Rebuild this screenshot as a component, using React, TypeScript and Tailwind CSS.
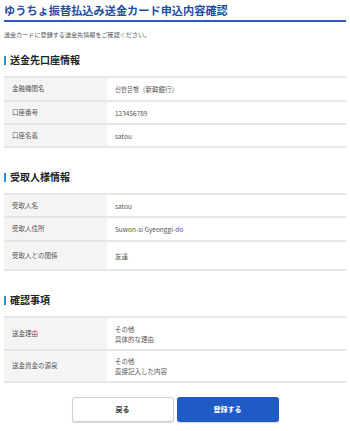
const font = { fontFamily: '"Noto Sans CJK JP", "Noto Sans CJK KR", sans-serif' };

interface Row {
  label: string;
  value: string[];
  h: string;
}

const sections: { title: string; rows: Row[] }[] = [
  {
    title: "送金先口座情報",
    rows: [
      { label: "金融機関名", value: ["신한은행（新韓銀行）"], h: "h-[24px]" },
      { label: "口座番号", value: ["123456789"], h: "h-[23px]" },
      { label: "口座名義", value: ["satou"], h: "h-[23px]" },
    ],
  },
  {
    title: "受取人様情報",
    rows: [
      { label: "受取人名", value: ["satou"], h: "h-[23px]" },
      { label: "受取人住所", value: ["Suwon-si Gyeonggi-do"], h: "h-[24px]" },
      { label: "受取人との関係", value: ["友達"], h: "h-[29px]" },
    ],
  },
  {
    title: "確認事項",
    rows: [
      { label: "送金理由", value: ["その他", "具体的な理由"], h: "h-[33px]" },
      { label: "送金資金の源泉", value: ["その他", "直接記入した内容"], h: "h-[32px]" },
    ],
  },
];

function Section({ title, rows }: { title: string; rows: Row[] }) {
  return (
    <div>
      <div className="flex items-center h-[14px]">
        <span className="w-[2px] h-[9px] bg-[#2a8fd0] mr-[4px]" />
        <h2 className="text-[10px] font-bold text-[#222] leading-none">{title}</h2>
      </div>
      <div className="mt-[9px] border-t-2 border-[#e6e6e6]">
        {rows.map((r) => (
          <div key={r.label} className={`flex border-b-2 border-[#e6e6e6] ${r.h}`}>
            <div className="w-[103px] bg-[#f4f4f4] flex items-center pl-[8px] text-[6.5px] text-[#555]">
              {r.label}
            </div>
            <div className="flex-1 flex flex-col justify-center pl-[8px] text-[6.5px] leading-[10px] text-[#555]">
              {r.value.map((v) => (
                <span key={v}>{v}</span>
              ))}
            </div>
          </div>
        ))}
      </div>
    </div>
  );
}

export default function App() {
  return (
    <div className="w-[350px] h-[431px] bg-white px-[4px] overflow-hidden" style={font}>
      <div className="pt-[3px] pb-[2px] border-b-2 border-[#2a5cb8]">
        <h1 className="text-[11.2px] font-bold text-[#1f4ea6] leading-[15px] tracking-[0px]">
          ゆうちょ振替払込み送金カード申込内容確認
        </h1>
      </div>
      <p className="mt-[9px] text-[6.1px] text-[#555] leading-[8px]">
        送金カードに登録する送金先情報をご確認ください。
      </p>
      <div className="mt-[14px] flex flex-col gap-[22px]">
        {sections.map((s) => (
          <Section key={s.title} title={s.title} rows={s.rows} />
        ))}
      </div>
      <div className="mt-[14px] flex justify-center gap-[3px]">
        <button className="w-[102px] h-[25px] rounded-[3px] border border-[#cfcfcf] bg-white shadow-[0_1px_1px_rgba(0,0,0,0.15)] text-[7px] font-bold text-[#333]">
          戻る
        </button>
        <button className="w-[102px] h-[25px] rounded-[3px] bg-[#1f5bc4] shadow-[0_1px_1px_rgba(0,0,0,0.15)] text-[7px] font-bold text-white">
          登録する
        </button>
      </div>
    </div>
  );
}
